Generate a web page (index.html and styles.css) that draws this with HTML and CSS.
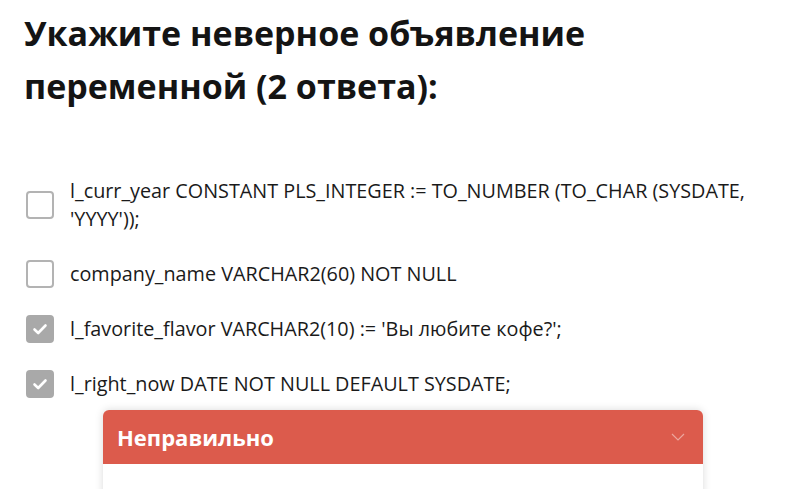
FILE: index.html
```html
<!DOCTYPE html>
<html lang="ru">
<head>
<meta charset="utf-8">
<link rel="stylesheet" href="styles.css">
</head>
<body>
<div class="page">
  <h1 class="title">Укажите неверное объявление переменной (2 ответа):</h1>
  <ul class="options">
    <li class="option">
      <span class="box"></span>
      <span class="label">l_curr_year CONSTANT PLS_INTEGER := TO_NUMBER (TO_CHAR (SYSDATE, 'YYYY'));</span>
    </li>
    <li class="option">
      <span class="box"></span>
      <span class="label">company_name VARCHAR2(60) NOT NULL</span>
    </li>
    <li class="option">
      <span class="box checked"><svg viewBox="0 0 28 28" width="28" height="28"><path d="M8.5 14.5 L12.2 18 L19.5 10.5" fill="none" stroke="#fff" stroke-width="2.6" stroke-linecap="round" stroke-linejoin="round"/></svg></span>
      <span class="label">l_favorite_flavor VARCHAR2(10) := 'Вы любите кофе?';</span>
    </li>
    <li class="option">
      <span class="box checked"><svg viewBox="0 0 28 28" width="28" height="28"><path d="M8.5 14.5 L12.2 18 L19.5 10.5" fill="none" stroke="#fff" stroke-width="2.6" stroke-linecap="round" stroke-linejoin="round"/></svg></span>
      <span class="label">l_right_now DATE NOT NULL DEFAULT SYSDATE;</span>
    </li>
  </ul>
  <div class="result">
    <div class="result-head">
      <span class="result-title">Неправильно</span>
      <svg class="chev" viewBox="0 0 14 8" width="14" height="8"><path d="M1 1 L7 7 L13 1" fill="none" stroke="rgba(255,255,255,0.45)" stroke-width="1.2"/></svg>
    </div>
    <div class="result-body"></div>
  </div>
</div>
</body>
</html>
```
FILE: styles.css
```css
* { box-sizing: border-box; }
html, body { margin: 0; padding: 0; background: #fff; }
body { font-family: "Open Sans", "Liberation Sans", sans-serif; color: #111; overflow: hidden; }
.page { padding: 7px 24px 0 24px; width: 796px; }
.title { margin: 0; font-size: 34px; line-height: 53px; font-weight: 700; color: #141414; max-width: 640px; }
.options { list-style: none; margin: 64px 0 0 0; padding: 0; display: flex; flex-direction: column; gap: 27px; }
.option { display: flex; align-items: center; gap: 16px; padding-left: 2px; }
.box { flex: 0 0 28px; width: 28px; height: 28px; border: 2px solid #b3b3b3; border-radius: 4px; display: block; position: relative; }
.box.checked { background: #a9a9a9; border-color: #a9a9a9; }
.box.checked svg { position: absolute; left: -2px; top: -2px; }
.label { font-size: 19.8px; line-height: 28px; color: #1a1a1a; }
.result { margin: 12px 0 0 79px; width: 600px; border-radius: 6px 6px 0 0; box-shadow: 0 0 8px rgba(0,0,0,0.15); overflow: hidden; }
.result-head { height: 54px; background: #dc5b4c; display: flex; align-items: center; justify-content: space-between; padding: 0 18px 0 14px; }
.result-title { color: #fff; font-weight: 700; font-size: 22px; }
.result-body { height: 40px; background: #fff; }
```
